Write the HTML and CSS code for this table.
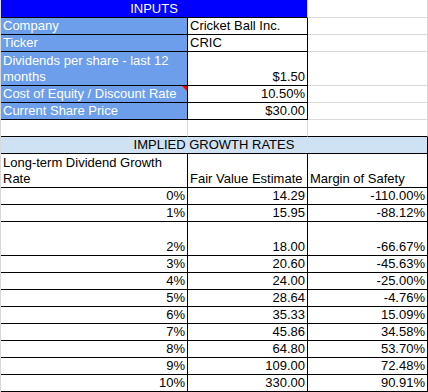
FILE: index.html
```html
<!DOCTYPE html>
<html lang="en">
<head>
<meta charset="utf-8">
<title>Dividend Discount Model</title>
<link rel="stylesheet" href="styles.css">
</head>
<body>
<div class="sheet">
  <div class="cell first head span2 center">INPUTS</div>
  <div class="cell first"></div>

  <div class="cell label b">Company</div>
  <div class="cell b">Cricket Ball Inc.</div>
  <div class="cell"></div>

  <div class="cell label b">Ticker</div>
  <div class="cell b">CRIC</div>
  <div class="cell"></div>

  <div class="cell label b tall">Dividends per share - last 12 months</div>
  <div class="cell b tall right">$1.50</div>
  <div class="cell tall"></div>

  <div class="cell label b note">Cost of Equity / Discount Rate<span class="comment"></span></div>
  <div class="cell b right">10.50%</div>
  <div class="cell"></div>

  <div class="cell label b">Current Share Price</div>
  <div class="cell b right">$30.00</div>
  <div class="cell"></div>

  <div class="cell bb"></div>
  <div class="cell bb"></div>
  <div class="cell bb"></div>

  <div class="cell sub span3 center b">IMPLIED GROWTH RATES</div>

  <div class="cell b tall">Long-term Dividend Growth Rate</div>
  <div class="cell b tall">Fair Value Estimate</div>
  <div class="cell b tall">Margin of Safety</div>

  <div class="cell b right">0%</div><div class="cell b right">14.29</div><div class="cell b right">-110.00%</div>
  <div class="cell b right">1%</div><div class="cell b right">15.95</div><div class="cell b right">-88.12%</div>
  <div class="cell b right tall">2%</div><div class="cell b right tall">18.00</div><div class="cell b right tall">-66.67%</div>
  <div class="cell b right">3%</div><div class="cell b right">20.60</div><div class="cell b right">-45.63%</div>
  <div class="cell b right">4%</div><div class="cell b right">24.00</div><div class="cell b right">-25.00%</div>
  <div class="cell b right">5%</div><div class="cell b right">28.64</div><div class="cell b right">-4.76%</div>
  <div class="cell b right">6%</div><div class="cell b right">35.33</div><div class="cell b right">15.09%</div>
  <div class="cell b right">7%</div><div class="cell b right">45.86</div><div class="cell b right">34.58%</div>
  <div class="cell b right">8%</div><div class="cell b right">64.80</div><div class="cell b right">53.70%</div>
  <div class="cell b right">9%</div><div class="cell b right">109.00</div><div class="cell b right">72.48%</div>
  <div class="cell b right">10%</div><div class="cell b right">330.00</div><div class="cell b right">90.91%</div>
</div>
</body>
</html>
```

FILE: styles.css
```css
html, body {
  margin: 0;
  padding: 0;
  background: #ffffff;
}

.sheet {
  display: grid;
  grid-template-columns: 187px 120px 120px;
  width: 427px;
  border-left: 1px solid #d9d9d9;
  font-family: "Liberation Sans", Arial, sans-serif;
  font-size: 13px;
  line-height: 16px;
  color: #000000;
}

.cell {
  box-sizing: border-box;
  height: 17px;
  padding: 0 2px 0 2px;
  border-right: 1px solid #d9d9d9;
  border-bottom: 1px solid #d9d9d9;
  display: flex;
  align-items: flex-end;
  justify-content: flex-start;
  overflow: hidden;
  white-space: normal;
}

.first {
  height: 18px;
}

.tall {
  height: 34px;
}

.span2 {
  grid-column: span 2;
}

.span3 {
  grid-column: span 3;
}

.center {
  justify-content: center;
}

.right {
  justify-content: flex-end;
}

.b {
  border-right-color: #000000;
  border-bottom-color: #000000;
}

.bb {
  border-bottom-color: #000000;
}

.head {
  background: #0000ff;
  color: #ffffff;
  border-right-color: #d9d9d9;
  border-bottom-color: #000000;
}

.label {
  background: #6d9eeb;
  color: #ffffff;
}

.sub {
  background: #cfe2f3;
}

.note {
  position: relative;
}

.comment {
  position: absolute;
  top: 0;
  right: 0;
  width: 0;
  height: 0;
  border-top: 5px solid #ff0000;
  border-left: 5px solid transparent;
}
```
